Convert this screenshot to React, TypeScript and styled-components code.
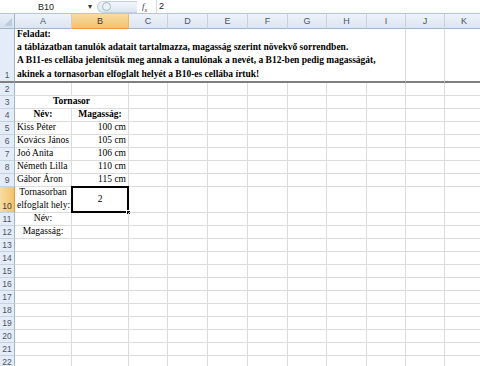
import React from "react";
import styled, { createGlobalStyle } from "styled-components";

const GlobalStyle = createGlobalStyle`
  html, body {
    margin: 0;
    padding: 0;
    background: #fff;
  }
  body {
    width: 480px;
    height: 366px;
    overflow: hidden;
  }
`;

type Align = "left" | "center" | "right";

type CellDef = {
  col: number;
  span?: number;
  text?: React.ReactNode;
  align?: Align;
  bold?: boolean;
  middle?: boolean;
  selected?: boolean;
};

type RowDef = {
  height: number;
  thick?: boolean;
  cells: CellDef[];
};

const COL_WIDTHS = [57, 57, 39, 40, 40, 40, 39, 40, 39, 39, 39];
const LETTERS = ["A", "B", "C", "D", "E", "F", "G", "H", "I", "J", "K"];
const SELECTED_COL = 1;
const SELECTED_ROW = 10;

const students = [
  ["Kiss Péter", "100 cm"],
  ["Kovács János", "105 cm"],
  ["Joó Anita", "106 cm"],
  ["Németh Lilla", "110 cm"],
  ["Gábor Áron", "115 cm"],
];

const rows: RowDef[] = [
  {
    height: 54,
    thick: true,
    cells: [
      {
        col: 0,
        span: 9,
        bold: true,
        text: (
          <>
            Feladat:
            <br />
            a táblázatban tanulók adatait tartalmazza, magasság szerint növekvő sorrendben.
            <br />
            A B11-es cellába jelenítsük meg annak a tanulónak a nevét, a B12-ben pedig magasságát,
            <br />
            akinek a tornasorban elfoglalt helyét a B10-es cellába írtuk!
          </>
        ),
      },
    ],
  },
  { height: 13, cells: [] },
  { height: 13, cells: [{ col: 0, span: 2, text: "Tornasor", bold: true, align: "center" }] },
  {
    height: 13,
    cells: [
      { col: 0, text: "Név:", bold: true, align: "center" },
      { col: 1, text: "Magasság:", bold: true, align: "center" },
    ],
  },
  ...students.map(([name, height]) => ({
    height: 13,
    cells: [
      { col: 0, text: name },
      { col: 1, text: height, align: "right" as Align },
    ],
  })),
  {
    height: 26,
    cells: [
      {
        col: 0,
        align: "center",
        text: (
          <>
            Tornasorban
            <br />
            elfoglalt hely:
          </>
        ),
      },
      { col: 1, text: "2", align: "center", middle: true, selected: true },
    ],
  },
  { height: 13, cells: [{ col: 0, text: "Név:", align: "center" }] },
  { height: 13, cells: [{ col: 0, text: "Magasság:", align: "center" }] },
  ...Array.from({ length: 10 }, () => ({ height: 13, cells: [] as CellDef[] })),
];

export default function App() {
  return (
    <>
      <GlobalStyle />
      <Window>
        <FormulaBar>
          <NameBox>B10</NameBox>
          <DropArrow>▾</DropArrow>
          <ButtonPill>
            <PillKnob />
          </ButtonPill>
          <FxLabel>
            f<sub>x</sub>
          </FxLabel>
          <FormulaInput>2</FormulaInput>
        </FormulaBar>

        <Sheet>
          <HeaderLine>
            <Corner>
              <CornerTriangle />
            </Corner>
            {LETTERS.map((letter, i) => (
              <ColHeader key={letter} $width={COL_WIDTHS[i]} $active={i === SELECTED_COL}>
                {letter}
              </ColHeader>
            ))}
          </HeaderLine>

          {rows.map((row, r) => {
            const rowNo = r + 1;
            const out: React.ReactNode[] = [];
            let c = 0;
            while (c < COL_WIDTHS.length) {
              const def = row.cells.find((cell) => cell.col === c);
              const span = def?.span ?? 1;
              const width = COL_WIDTHS.slice(c, c + span).reduce((a, b) => a + b, 0);
              out.push(
                <Cell
                  key={c}
                  $width={width}
                  $align={def?.align ?? "left"}
                  $bold={!!def?.bold}
                  $middle={!!def?.middle}
                  $thick={!!row.thick}
                >
                  {def?.text}
                  {def?.selected && (
                    <Selection>
                      <FillHandle />
                    </Selection>
                  )}
                </Cell>
              );
              c += span;
            }
            return (
              <SheetRow key={rowNo} $height={row.height}>
                <RowHeader $active={rowNo === SELECTED_ROW} $thick={!!row.thick}>
                  {rowNo}
                </RowHeader>
                {out}
              </SheetRow>
            );
          })}
        </Sheet>
      </Window>
    </>
  );
}

const Window = styled.div`
  width: 480px;
  height: 366px;
  overflow: hidden;
  background: #fff;
  display: flex;
  flex-direction: column;
`;

const FormulaBar = styled.div`
  display: flex;
  align-items: center;
  height: 13px;
  flex-shrink: 0;
  background: #fff;
  border-bottom: 1px solid #b7c6d9;
  font-family: "Liberation Sans", Arial, sans-serif;
  font-size: 9px;
  color: #222;
`;

const NameBox = styled.div`
  width: 88px;
  text-align: center;
  padding-left: 4px;
  box-sizing: border-box;
`;

const DropArrow = styled.div`
  width: 8px;
  font-size: 8px;
  color: #333;
`;

const ButtonPill = styled.div`
  width: 40px;
  height: 12px;
  margin-left: 1px;
  border-radius: 7px 0 0 7px;
  background: linear-gradient(#f4f7fb, #dce5f1);
  border: 1px solid #c3cfdd;
  border-right: none;
  box-sizing: border-box;
  display: flex;
  align-items: center;
  padding-left: 4px;
`;

const PillKnob = styled.div`
  width: 7px;
  height: 7px;
  border-radius: 50%;
  border: 1px solid #a9b6c6;
  background: #eef2f8;
`;

const FxLabel = styled.div`
  width: 14px;
  margin-left: 5px;
  font-family: "Liberation Serif", "Times New Roman", serif;
  font-style: italic;
  font-size: 9px;
  color: #333;
  sub {
    font-size: 6px;
  }
`;

const FormulaInput = styled.div`
  flex: 1;
  padding-left: 2px;
  border-left: 1px solid #d6dde6;
  height: 13px;
  line-height: 13px;
`;

const Sheet = styled.div`
  display: flex;
  flex-direction: column;
`;

const HeaderLine = styled.div`
  display: flex;
  height: 15px;
  flex-shrink: 0;
`;

const Corner = styled.div`
  position: relative;
  width: 15px;
  flex-shrink: 0;
  box-sizing: border-box;
  background: linear-gradient(#e9eff8, #d5e0ee);
  border-right: 1px solid #9eb6ce;
  border-bottom: 1px solid #9eb6ce;
`;

const CornerTriangle = styled.div`
  position: absolute;
  right: 2px;
  bottom: 2px;
  width: 0;
  height: 0;
  border-left: 8px solid transparent;
  border-bottom: 8px solid #bccce0;
`;

const ColHeader = styled.div<{ $width: number; $active: boolean }>`
  width: ${(p) => p.$width}px;
  flex-shrink: 0;
  box-sizing: border-box;
  display: flex;
  align-items: center;
  justify-content: center;
  font-family: "Liberation Sans", Arial, sans-serif;
  font-size: 9px;
  color: ${(p) => (p.$active ? "#3b3b3b" : "#4a5568")};
  background: ${(p) =>
    p.$active
      ? "linear-gradient(#f9dba4, #f2c46a)"
      : "linear-gradient(#eef3fa, #dce5f1)"};
  border-right: 1px solid ${(p) => (p.$active ? "#f0b65c" : "#c5d2e2")};
  border-bottom: 1px solid ${(p) => (p.$active ? "#f29536" : "#9eb6ce")};
`;

const SheetRow = styled.div<{ $height: number }>`
  display: flex;
  height: ${(p) => p.$height}px;
  flex-shrink: 0;
`;

const RowHeader = styled.div<{ $active: boolean; $thick: boolean }>`
  width: 15px;
  flex-shrink: 0;
  box-sizing: border-box;
  display: flex;
  align-items: flex-end;
  justify-content: center;
  padding-bottom: 1px;
  font-family: "Liberation Sans", Arial, sans-serif;
  font-size: 8.5px;
  line-height: 10px;
  color: ${(p) => (p.$active ? "#3b3b3b" : "#4a5568")};
  background: ${(p) =>
    p.$active ? "linear-gradient(90deg, #f9dba4, #f2c46a)" : "#e4ecf7"};
  border-right: 1px solid ${(p) => (p.$active ? "#f29536" : "#9eb6ce")};
  border-bottom: ${(p) => (p.$thick ? "2px solid #808080" : "1px solid #c5d2e2")};
`;

const Cell = styled.div<{
  $width: number;
  $align: Align;
  $bold: boolean;
  $middle: boolean;
  $thick: boolean;
}>`
  position: relative;
  width: ${(p) => p.$width}px;
  flex-shrink: 0;
  box-sizing: border-box;
  display: flex;
  flex-direction: column;
  justify-content: ${(p) => (p.$middle ? "center" : "flex-end")};
  text-align: ${(p) => p.$align};
  padding: 0 2px;
  font-family: "Liberation Serif", "Times New Roman", serif;
  font-size: 9.5px;
  line-height: ${(p) => (p.$thick ? "13.3px" : "13px")};
  font-weight: ${(p) => (p.$bold ? 700 : 400)};
  color: #000;
  white-space: nowrap;
  border-right: 1px solid #dadcdd;
  border-bottom: ${(p) => (p.$thick ? "2px solid #808080" : "1px solid #dadcdd")};
`;

const Selection = styled.div`
  position: absolute;
  left: -1px;
  top: -1px;
  right: -1px;
  bottom: -1px;
  border: 2px solid #000;
  pointer-events: none;
`;

const FillHandle = styled.div`
  position: absolute;
  right: -4px;
  bottom: -4px;
  width: 5px;
  height: 5px;
  background: #000;
  border: 1px solid #fff;
  box-sizing: border-box;
`;
